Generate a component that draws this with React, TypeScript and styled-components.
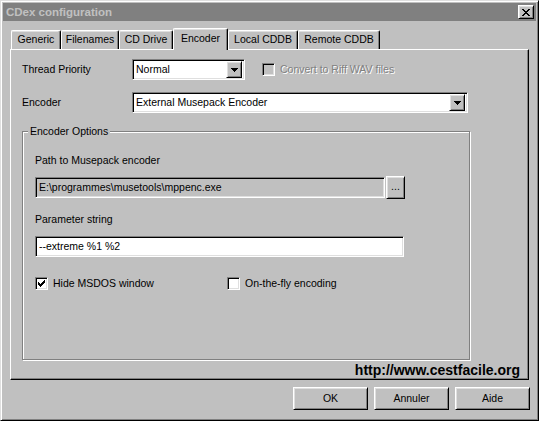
import React from "react";
import styled, { createGlobalStyle, css } from "styled-components";

const GlobalStyle = createGlobalStyle`
  html, body { margin: 0; padding: 0; background: #c0c0c0; }
  body {
    font-family: "Liberation Sans", Arial, sans-serif;
    font-size: 10.5px;
    color: #000;
  }
  * { box-sizing: border-box; }
`;

const raised = css`
  border-top: 1px solid #fff;
  border-left: 1px solid #fff;
  border-right: 1px solid #000;
  border-bottom: 1px solid #000;
  box-shadow: inset 1px 1px #dfdfdf, inset -1px -1px #808080;
`;

const sunken = css`
  border-top: 1px solid #808080;
  border-left: 1px solid #808080;
  border-right: 1px solid #fff;
  border-bottom: 1px solid #fff;
  box-shadow: inset 1px 1px #000, inset -1px -1px #dfdfdf;
`;

const Window = styled.div`
  width: 539px;
  height: 421px;
  background: #c0c0c0;
  border-top: 1px solid #dfdfdf;
  border-left: 1px solid #dfdfdf;
  border-right: 1px solid #000;
  border-bottom: 1px solid #000;
  box-shadow: inset 1px 1px #fff, inset -1px -1px #808080;
  padding: 2px;
  display: flex;
  flex-direction: column;
`;

const TitleBar = styled.div`
  height: 18px;
  background: #808080;
  display: flex;
  align-items: center;
  justify-content: space-between;
  padding: 0 2px 0 3px;
`;

const TitleText = styled.span`
  color: #c0c0c0;
  font-weight: bold;
  font-size: 11.5px;
`;

const CloseButton = styled.div`
  width: 16px;
  height: 14px;
  background: #c0c0c0;
  ${raised};
  display: flex;
  align-items: center;
  justify-content: center;
`;

const TabStrip = styled.div`
  margin: 8px 7px 0 8px;
  height: 21px;
  display: flex;
  align-items: flex-end;
  position: relative;
  z-index: 1;
  margin-bottom: -1px;
`;

const Tab = styled.div<{ $w: number; $active?: boolean }>`
  width: ${(p) => p.$w}px;
  height: ${(p) => (p.$active ? 22 : 19)}px;
  margin-bottom: ${(p) => (p.$active ? 0 : 1)}px;
  background: #c0c0c0;
  border-top: 1px solid #fff;
  border-left: 1px solid #fff;
  border-right: 1px solid #000;
  border-radius: 2px 2px 0 0;
  box-shadow: inset -1px 0 #808080, inset 0 1px #dfdfdf;
  display: flex;
  justify-content: center;
  padding-top: ${(p) => (p.$active ? 3 : 2)}px;
  white-space: nowrap;
  line-height: 13px;
`;

const Panel = styled.div`
  margin: 0 7px 0 7px;
  height: 331px;
  background: #c0c0c0;
  border-top: 1px solid #fff;
  border-left: 1px solid #fff;
  border-right: 1px solid #000;
  border-bottom: 1px solid #000;
  box-shadow: inset -1px -1px #808080;
  padding: 9px 0 0 11px;
  display: flex;
  flex-direction: column;
`;

const FormRow = styled.div<{ $mt?: number }>`
  display: flex;
  align-items: center;
  height: 21px;
  margin-top: ${(p) => p.$mt ?? 0}px;
`;

const Label = styled.span<{ $w?: number; $disabled?: boolean }>`
  width: ${(p) => (p.$w ? `${p.$w}px` : "auto")};
  white-space: nowrap;
  line-height: 13px;
  ${(p) =>
    p.$disabled &&
    css`
      color: #808080;
      text-shadow: 1px 1px #fff;
    `}
`;

const Combo = styled.div<{ $w: number }>`
  width: ${(p) => p.$w}px;
  height: 21px;
  background: #fff;
  ${sunken};
  display: flex;
  align-items: center;
  padding: 2px;
`;

const ComboText = styled.span`
  flex: 1;
  padding-left: 1px;
  line-height: 13px;
  white-space: nowrap;
`;

const ComboButton = styled.div`
  width: 16px;
  height: 17px;
  background: #c0c0c0;
  ${raised};
  display: flex;
  align-items: center;
  justify-content: center;
`;

const CheckBox = styled.div<{ $disabled?: boolean }>`
  width: 13px;
  height: 13px;
  flex: none;
  background: ${(p) => (p.$disabled ? "#c0c0c0" : "#fff")};
  ${sunken};
  display: flex;
  align-items: center;
  justify-content: center;
`;

const CheckItem = styled.div<{ $ml?: number; $w?: number }>`
  display: flex;
  align-items: center;
  gap: 5px;
  margin-left: ${(p) => p.$ml ?? 0}px;
  width: ${(p) => (p.$w ? `${p.$w}px` : "auto")};
`;

const GroupBox = styled.div`
  position: relative;
  margin-top: 18px;
  width: 448px;
  height: 229px;
  border: 1px solid #808080;
  box-shadow: inset 1px 1px #fff, 1px 1px #fff;
  padding: 22px 0 0 12px;
  display: flex;
  flex-direction: column;
`;

const GroupLegend = styled.span`
  position: absolute;
  top: -7px;
  left: 5px;
  padding: 0 2px;
  background: #c0c0c0;
  line-height: 13px;
  white-space: nowrap;
`;

const FieldLabel = styled.div<{ $mt?: number }>`
  line-height: 13px;
  margin-top: ${(p) => p.$mt ?? 0}px;
`;

const FieldRow = styled.div<{ $mt?: number }>`
  display: flex;
  align-items: center;
  margin-top: ${(p) => p.$mt ?? 0}px;
`;

const Edit = styled.div<{ $w: number; $readonly?: boolean }>`
  width: ${(p) => p.$w}px;
  height: 21px;
  background: ${(p) => (p.$readonly ? "#c0c0c0" : "#fff")};
  ${sunken};
  display: flex;
  align-items: center;
  padding: 0 3px;
  line-height: 13px;
  white-space: nowrap;
`;

const BrowseButton = styled.div`
  width: 19px;
  height: 23px;
  background: #c0c0c0;
  ${raised};
  display: flex;
  align-items: center;
  justify-content: center;
  padding-bottom: 3px;
  margin-left: 1px;
`;

const CheckRow = styled.div`
  display: flex;
  align-items: center;
  margin-top: 20px;
  height: 13px;
`;

const UrlRow = styled.div`
  display: flex;
  justify-content: flex-end;
  padding-right: 8px;
  margin-top: 2px;
  font-weight: bold;
  font-size: 14px;
  line-height: 16px;
`;

const ButtonRow = styled.div`
  display: flex;
  justify-content: flex-end;
  gap: 6px;
  margin: 7px 6px 0 0;
`;

const PushButton = styled.div`
  width: 75px;
  height: 23px;
  background: #c0c0c0;
  ${raised};
  display: flex;
  align-items: center;
  justify-content: center;
  line-height: 13px;
`;

const Arrow = () => (
  <svg width="7" height="4" viewBox="0 0 7 4" shapeRendering="crispEdges">
    <path d="M0 0H7L3.5 4Z" fill="#000" />
  </svg>
);

const Check = () => (
  <svg width="7" height="7" viewBox="0 0 7 7" shapeRendering="crispEdges">
    <path
      d="M6 0h1v3h-1v1h-1v1h-1v1h-1v1h-1v-1h-1v-1h-1v-3h1v1h1v1h1v-1h1v-1h1v-1h1z"
      fill="#000"
    />
  </svg>
);

const CloseX = () => (
  <svg width="8" height="7" viewBox="0 0 8 7" shapeRendering="crispEdges">
    <path
      d="M0 0h2v1h1v1h2v-1h1v-1h2v1h-1v1h-1v1h-1v1h1v1h1v1h1v1h-2v-1h-1v-1h-2v1h-1v1h-2v-1h1v-1h1v-1h1v-1h-1v-1h-1v-1h-1z"
      fill="#000"
    />
  </svg>
);

const tabs = [
  { label: "Generic", w: 50 },
  { label: "Filenames", w: 58 },
  { label: "CD Drive", w: 54 },
  { label: "Encoder", w: 55, active: true },
  { label: "Local CDDB", w: 70 },
  { label: "Remote CDDB", w: 82 },
];

export default function App() {
  return (
    <>
      <GlobalStyle />
      <Window>
        <TitleBar>
          <TitleText>CDex configuration</TitleText>
          <CloseButton>
            <CloseX />
          </CloseButton>
        </TitleBar>
        <TabStrip>
          {tabs.map((t) => (
            <Tab key={t.label} $w={t.w} $active={t.active}>
              {t.label}
            </Tab>
          ))}
        </TabStrip>
        <Panel>
          <FormRow>
            <Label $w={110}>Thread Priority</Label>
            <Combo $w={113}>
              <ComboText>Normal</ComboText>
              <ComboButton>
                <Arrow />
              </ComboButton>
            </Combo>
            <CheckItem $ml={17}>
              <CheckBox $disabled />
              <Label $disabled>Convert to Riff WAV files</Label>
            </CheckItem>
          </FormRow>
          <FormRow $mt={12}>
            <Label $w={110}>Encoder</Label>
            <Combo $w={336}>
              <ComboText>External Musepack Encoder</ComboText>
              <ComboButton>
                <Arrow />
              </ComboButton>
            </Combo>
          </FormRow>
          <GroupBox>
            <GroupLegend>Encoder Options</GroupLegend>
            <FieldLabel>Path to Musepack encoder</FieldLabel>
            <FieldRow $mt={9}>
              <Edit $w={350} $readonly>
                E:\programmes\musetools\mppenc.exe
              </Edit>
              <BrowseButton>...</BrowseButton>
            </FieldRow>
            <FieldLabel $mt={14}>Parameter string</FieldLabel>
            <FieldRow $mt={10}>
              <Edit $w={369}>--extreme %1 %2</Edit>
            </FieldRow>
            <CheckRow>
              <CheckItem $w={192}>
                <CheckBox>
                  <Check />
                </CheckBox>
                <Label>Hide MSDOS window</Label>
              </CheckItem>
              <CheckItem>
                <CheckBox />
                <Label>On-the-fly encoding</Label>
              </CheckItem>
            </CheckRow>
          </GroupBox>
          <UrlRow>http://www.cestfacile.org</UrlRow>
        </Panel>
        <ButtonRow>
          <PushButton>OK</PushButton>
          <PushButton>Annuler</PushButton>
          <PushButton>Aide</PushButton>
        </ButtonRow>
      </Window>
    </>
  );
}
